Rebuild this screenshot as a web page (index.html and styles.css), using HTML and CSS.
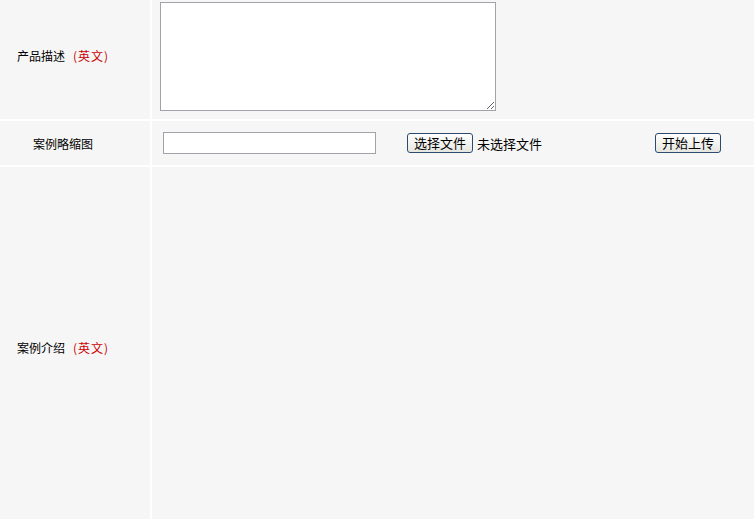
FILE: index.html
```html
<!DOCTYPE html>
<html lang="zh-CN">

<head>
  <meta charset="UTF-8">
  <meta name="viewport" content="width=device-width, initial-scale=1.0">
  <title>案例编辑</title>
  <link rel="stylesheet" href="styles.css">
</head>

<body>
  <!-- Case edit form -->
  <div class="form-table">
    <div class="cell label label-desc">产品描述<span class="lang">(英文)</span></div>
    <div class="cell field field-desc">
      <textarea class="desc-box"></textarea>
    </div>

    <div class="cell label">案例略缩图</div>
    <div class="cell field field-upload">
      <input type="text" class="path-input">
      <span class="file-pick">
        <button class="btn">选择文件</button>
        <span class="file-name">未选择文件</span>
      </span>
      <button class="btn btn-upload">开始上传</button>
    </div>

    <div class="cell label">案例介绍<span class="lang">(英文)</span></div>
    <div class="cell field"></div>
  </div>
</body>

</html>
```

FILE: styles.css
```css
body {
  margin: 0;
  background-color: #fff;
  font-family: 'Noto Sans CJK SC', 'DejaVu Sans', sans-serif;
  font-size: 12px;
  color: #000;
}

.form-table {
  display: grid;
  grid-template-columns: 150px 1fr;
  grid-template-rows: 119px 44px 360px;
  gap: 2px;
}

.cell {
  background-color: #f6f6f6;
}

.label {
  display: flex;
  align-items: center;
  justify-content: center;
  padding-right: 24px;
  white-space: pre;
}

.label-desc {
  padding-bottom: 8px;
}

.lang {
  margin-left: 8px;
  color: #c00;
  font-size: 12px;
  letter-spacing: 1px;
}

.field {
  padding-left: 8px;
}

.field-desc {
  padding-top: 2px;
}

.desc-box {
  display: block;
  box-sizing: border-box;
  width: 336px;
  height: 109px;
  margin: 0;
  border: 1px solid #a0a4a8;
  background-color: #fff;
}

.field-upload {
  display: flex;
  align-items: center;
  padding-left: 11px;
}

.path-input {
  box-sizing: border-box;
  width: 213px;
  height: 22px;
  margin: 0 31px 0 0;
  border: 1px solid #a0a4a8;
  background-color: #fff;
}

.file-pick {
  display: flex;
  align-items: center;
}

.btn {
  box-sizing: border-box;
  height: 20px;
  width: 66px;
  padding: 0;
  border: 1px solid #2d4b6e;
  border-radius: 3px;
  background: linear-gradient(#ffffff, #e6e6e0);
  font-family: inherit;
  font-size: 13px;
  line-height: 18px;
  color: #000;
}

.file-name {
  margin-left: 4px;
  font-size: 13px;
}

.btn-upload {
  margin-left: 113px;
}
```
